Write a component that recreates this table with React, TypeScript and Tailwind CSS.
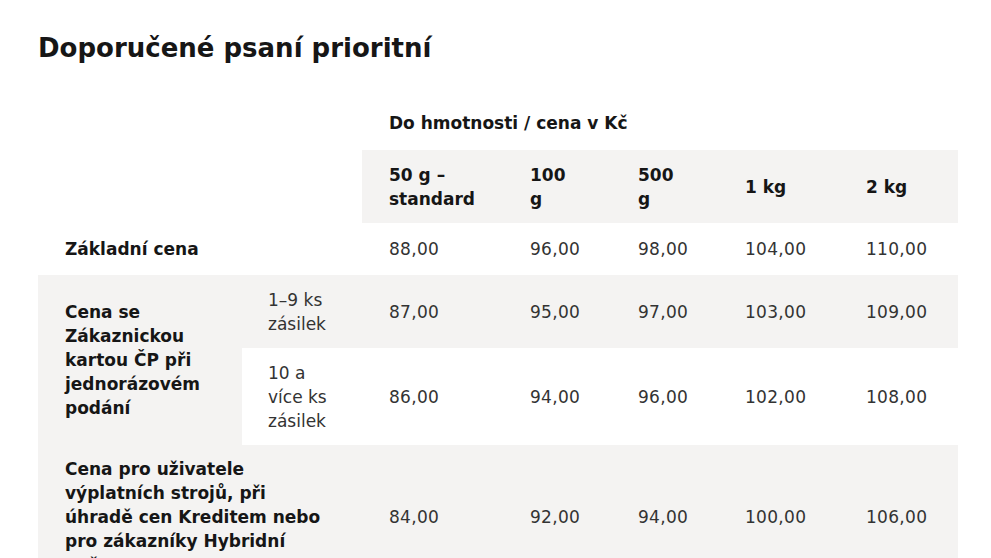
import React from "react";

const font = { fontFamily: "'DejaVu Sans', 'Noto Sans', sans-serif" };

export default function App() {
  const cell = "px-[27px] py-[12px] align-middle text-left";
  const num = `${cell} tracking-[0.3px]`;
  return (
    <div className="w-[991px] h-[558px] overflow-hidden bg-white text-[#333333]" style={font}>
      <div className="pl-[38px] pr-[33px] pt-[31px]">
        <h1 className="text-[26px] leading-[34px] font-bold text-[#161616]">Doporučené psaní prioritní</h1>
        <table className="mt-[35px] w-[920px] table-fixed border-collapse text-[17px] leading-[24px]">
          <colgroup>
            <col className="w-[204px]" />
            <col className="w-[120px]" />
            <col className="w-[141px]" />
            <col className="w-[108px]" />
            <col className="w-[107px]" />
            <col className="w-[121px]" />
            <col className="w-[119px]" />
          </colgroup>
          <thead>
            <tr className="h-[50px]">
              <th colSpan={2}></th>
              <th colSpan={5} className="px-[27px] pb-[4px] text-left align-middle font-bold text-[#161616] text-[17px]">
                Do hmotnosti / cena v Kč
              </th>
            </tr>
            <tr className="h-[73px] text-left font-bold text-[#161616]">
              <th colSpan={2} className="bg-white"></th>
              <th className="pl-[27px] pr-[10px] py-[12px] align-middle text-left bg-[#f4f3f2]">
                50 g –<br />standard
              </th>
              <th className={`${cell} bg-[#f4f3f2]`}>
                100<br />g
              </th>
              <th className={`${cell} bg-[#f4f3f2]`}>
                500<br />g
              </th>
              <th className={`${cell} bg-[#f4f3f2]`}>1 kg</th>
              <th className={`${cell} bg-[#f4f3f2]`}>2 kg</th>
            </tr>
          </thead>
          <tbody>
            <tr className="h-[52px]">
              <td colSpan={2} className={`${cell} font-bold text-[#161616]`}>Základní cena</td>
              <td className={num}>88,00</td>
              <td className={num}>96,00</td>
              <td className={num}>98,00</td>
              <td className={num}>104,00</td>
              <td className={num}>110,00</td>
            </tr>
            <tr className="h-[73px] bg-[#f4f3f2]">
              <td rowSpan={2} className={`${cell} font-bold text-[#161616] bg-[#f4f3f2]`}>
                Cena se Zákaznickou kartou ČP při jednorázovém podání
              </td>
              <td className="pl-[26px] pr-[24px] py-[12px] align-middle">1–9 ks zásilek</td>
              <td className={num}>87,00</td>
              <td className={num}>95,00</td>
              <td className={num}>97,00</td>
              <td className={num}>103,00</td>
              <td className={num}>109,00</td>
            </tr>
            <tr className="h-[97px] bg-white">
              <td className="pl-[26px] pr-[24px] py-[12px] align-middle">10 a více ks zásilek</td>
              <td className={num}>86,00</td>
              <td className={num}>94,00</td>
              <td className={num}>96,00</td>
              <td className={num}>102,00</td>
              <td className={num}>108,00</td>
            </tr>
            <tr className="bg-[#f4f3f2]">
              <td colSpan={2} className={`${cell} font-bold text-[#161616]`}>
                Cena pro uživatele výplatních strojů, při úhradě cen Kreditem nebo pro zákazníky Hybridní pošty
              </td>
              <td className={num}>84,00</td>
              <td className={num}>92,00</td>
              <td className={num}>94,00</td>
              <td className={num}>100,00</td>
              <td className={num}>106,00</td>
            </tr>
          </tbody>
        </table>
      </div>
    </div>
  );
}
